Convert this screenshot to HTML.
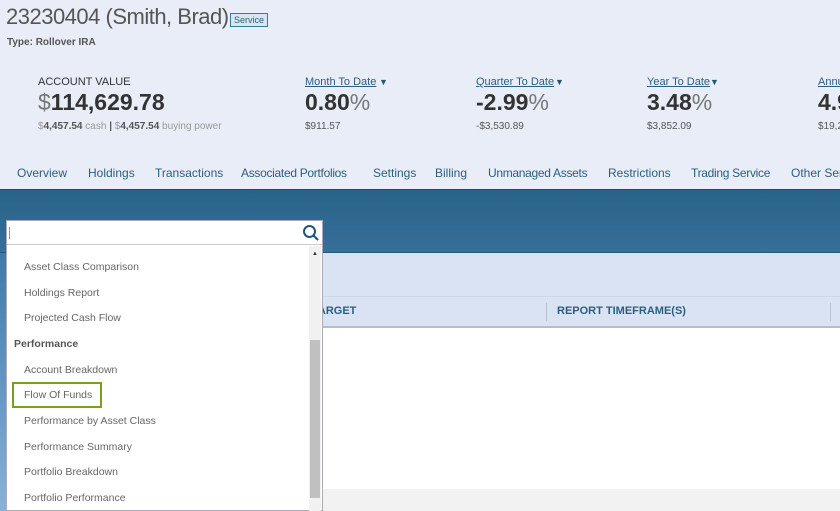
<!DOCTYPE html>
<html><head><meta charset="utf-8"><style>
*{margin:0;padding:0;box-sizing:border-box}
body{width:840px;height:511px;overflow:hidden;background:#fff;font-family:"Liberation Sans",sans-serif;position:relative}
.a{position:absolute;white-space:nowrap}
</style></head><body>
<div class="a" style="left:0;top:0;width:840px;height:189px;background:#e9edf7"></div>
<div class="a" style="left:6px;top:4px;font-size:22px;letter-spacing:-0.5px;color:#555">23230404 (Smith, Brad)</div>
<div class="a" style="left:230px;top:13px;border:1.5px solid #3a7a9a;background:#d6e6ee;color:#35607a;font-size:9px;padding:1px 3px">Service</div>
<div class="a" style="left:7px;top:37px;font-size:10px;font-weight:bold;color:#555">Type: Rollover IRA</div>

<div class="a" style="left:38px;top:76px;font-size:11px;color:#333">ACCOUNT VALUE</div>
<div class="a" style="left:38px;top:89px;font-size:23px;color:#333"><span style="color:#777">$</span><b>114,629.78</b></div>
<div class="a" style="left:38px;top:121px;font-size:10px;color:#999">$<b style="color:#555">4,457.54</b> cash <b style="color:#555">|</b> $<b style="color:#555">4,457.54</b> buying power</div>

<div class="a" style="left:305px;top:76px;font-size:11px;color:#2c5f7e;text-decoration:underline">Month To Date</div>
<div class="a" style="left:379px;top:77px;font-size:9px;color:#1f5878">▼</div>
<div class="a" style="left:305px;top:89px;font-size:23px;color:#333"><b>0.80</b><span style="color:#777">%</span></div>
<div class="a" style="left:305px;top:121px;font-size:10px;color:#555">$911.57</div>

<div class="a" style="left:476px;top:76px;font-size:11px;color:#2c5f7e;text-decoration:underline">Quarter To Date</div>
<div class="a" style="left:555px;top:77px;font-size:9px;color:#1f5878">▼</div>
<div class="a" style="left:476px;top:89px;font-size:23px;color:#333"><b>-2.99</b><span style="color:#777">%</span></div>
<div class="a" style="left:476px;top:121px;font-size:10px;color:#555">-$3,530.89</div>

<div class="a" style="left:647px;top:76px;font-size:11px;color:#2c5f7e;text-decoration:underline">Year To Date</div>
<div class="a" style="left:710px;top:77px;font-size:9px;color:#1f5878">▼</div>
<div class="a" style="left:647px;top:89px;font-size:23px;color:#333"><b>3.48</b><span style="color:#777">%</span></div>
<div class="a" style="left:647px;top:121px;font-size:10px;color:#555">$3,852.09</div>

<div class="a" style="left:818px;top:76px;font-size:11px;color:#2c5f7e;text-decoration:underline">Annual</div>
<div class="a" style="left:818px;top:89px;font-size:23px;color:#333"><b>4.9</b></div>
<div class="a" style="left:818px;top:121px;font-size:10px;color:#555">$19,2</div>

<div class="a" style="top:166px;font-size:12px;color:#2c5f7e;left:0;width:900px">
<span class="a" style="left:17px">Overview</span><span class="a" style="left:88px">Holdings</span><span class="a" style="left:155px">Transactions</span><span class="a" style="left:241px;letter-spacing:-0.3px">Associated Portfolios</span><span class="a" style="left:373px">Settings</span><span class="a" style="left:435px">Billing</span><span class="a" style="left:488px;letter-spacing:-0.3px">Unmanaged Assets</span><span class="a" style="left:608px">Restrictions</span><span class="a" style="left:691px;letter-spacing:-0.3px">Trading Service</span><span class="a" style="left:791px">Other Services</span></div>

<div class="a" style="left:0;top:189px;width:840px;height:64px;background:linear-gradient(#28638a,#376f97);border-top:1px solid #1f4f70;border-bottom:1px solid #26587a"></div>
<div class="a" style="left:0;top:253px;width:840px;height:44px;background:#dae3f3"></div>
<div class="a" style="left:0;top:296px;width:840px;height:32px;background:#dae3f3;border-top:1px solid #cfd8e8;border-bottom:2px solid #b8bec8"></div>
<div class="a" style="left:0;top:253px;width:6px;height:258px;background:linear-gradient(#3f7aa5,#86b3d8)"></div>
<div class="a" style="left:312px;top:305px;font-size:11px;font-weight:bold;color:#2c5f7e">TARGET</div>
<div class="a" style="left:546px;top:303px;width:1px;height:18px;background:#b8c2d0"></div>
<div class="a" style="left:557px;top:305px;font-size:11px;font-weight:bold;color:#2c5f7e">REPORT TIMEFRAME(S)</div>
<div class="a" style="left:830px;top:303px;width:1px;height:18px;background:#b8c2d0"></div>
<div class="a" style="left:6px;top:489px;width:834px;height:22px;background:#f2f2f2"></div>

<div class="a" style="left:6px;top:220px;width:317px;height:291px;background:#fff;border:1px solid #aab"></div>
<div class="a" style="left:7px;top:221px;width:315px;height:24px;border-bottom:1px solid #ccc"></div>
<div class="a" style="left:9px;top:227px;width:1px;height:12px;background:#999"></div>
<svg class="a" style="left:302px;top:224px" width="18" height="18" viewBox="0 0 18 18"><circle cx="7.5" cy="7.5" r="5.5" fill="none" stroke="#1f5878" stroke-width="2"/><path d="M11.5 11.5L16 16" stroke="#1f5878" stroke-width="2.2"/></svg>
<div class="a" style="left:309px;top:246px;width:12px;height:265px;background:#f1f1f1"></div>
<div class="a" style="left:312px;top:251px;font-size:6px;color:#333">▲</div>
<div class="a" style="left:310px;top:340px;width:10px;height:158px;background:#c0c0c0"></div>
<div class="a" style="top:0;left:0;font-size:10.5px;color:#666">
<span class="a" style="left:24px;top:261px">Asset Class Comparison</span>
<span class="a" style="left:24px;top:287px">Holdings Report</span>
<span class="a" style="left:24px;top:312px">Projected Cash Flow</span>
<span class="a" style="left:14px;top:338px;color:#555;font-weight:bold">Performance</span>
<span class="a" style="left:24px;top:364px">Account Breakdown</span>
<span class="a" style="left:24px;top:389px">Flow Of Funds</span>
<span class="a" style="left:24px;top:415px">Performance by Asset Class</span>
<span class="a" style="left:24px;top:441px">Performance Summary</span>
<span class="a" style="left:24px;top:466px">Portfolio Breakdown</span>
<span class="a" style="left:24px;top:492px">Portfolio Performance</span>
</div>
<div class="a" style="left:12px;top:382px;width:90px;height:26px;border:2px solid #76a020"></div>
</body></html>
